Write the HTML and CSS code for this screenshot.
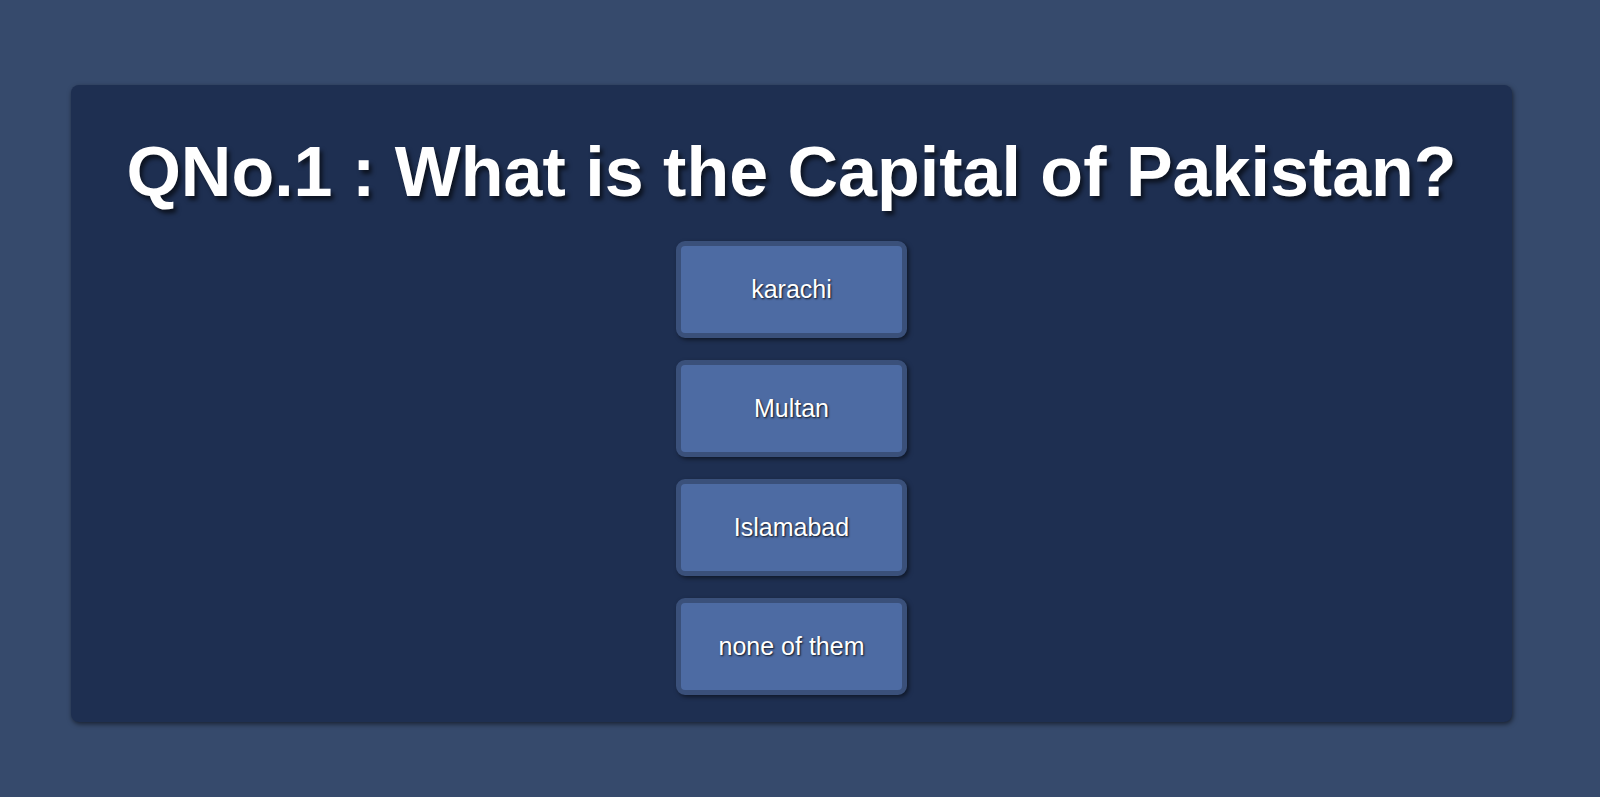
FILE: index.html
```html
<!DOCTYPE html>
<html lang="en">
<head>
<meta charset="utf-8">
<title>Quiz</title>
<link rel="stylesheet" href="styles.css">
</head>
<body>
<div class="page">
  <div class="card">
    <h1 class="question">QNo.1 : What is the Capital of Pakistan?</h1>
    <div class="options">
      <button class="option">karachi</button>
      <button class="option">Multan</button>
      <button class="option">Islamabad</button>
      <button class="option">none of them</button>
    </div>
  </div>
</div>
</body>
</html>
```

FILE: styles.css
```css
html, body {
  margin: 0;
  padding: 0;
  background: #364a6c;
  font-family: "Liberation Sans", Arial, sans-serif;
  height: 100%;
}

.page {
  padding: 85px 0 0 71px;
}

.card {
  width: 1441px;
  box-sizing: border-box;
  background: #1e2f51;
  border-radius: 8px;
  box-shadow: 1px 2px 5px rgba(0, 0, 0, 0.55);
  padding: 47px 0 27px;
  text-align: center;
}

.question {
  margin: 0 0 29px;
  font-size: 70px;
  line-height: 80px;
  font-weight: bold;
  color: #ffffff;
  text-shadow: 3px 4px 4px rgba(0, 0, 0, 0.6);
}

.options {
  display: flex;
  flex-direction: column;
  align-items: center;
  gap: 22px;
}

.option {
  width: 231px;
  height: 97px;
  box-sizing: border-box;
  border: 5px solid #3a507a;
  border-radius: 9px;
  background: #4d6ba3;
  color: #ffffff;
  font-family: "Liberation Sans", Arial, sans-serif;
  font-size: 25px;
  text-shadow: 1px 1px 2px rgba(0, 0, 0, 0.8);
  box-shadow: 2px 2px 4px rgba(0, 0, 0, 0.5);
  cursor: pointer;
  padding: 0;
}
```
